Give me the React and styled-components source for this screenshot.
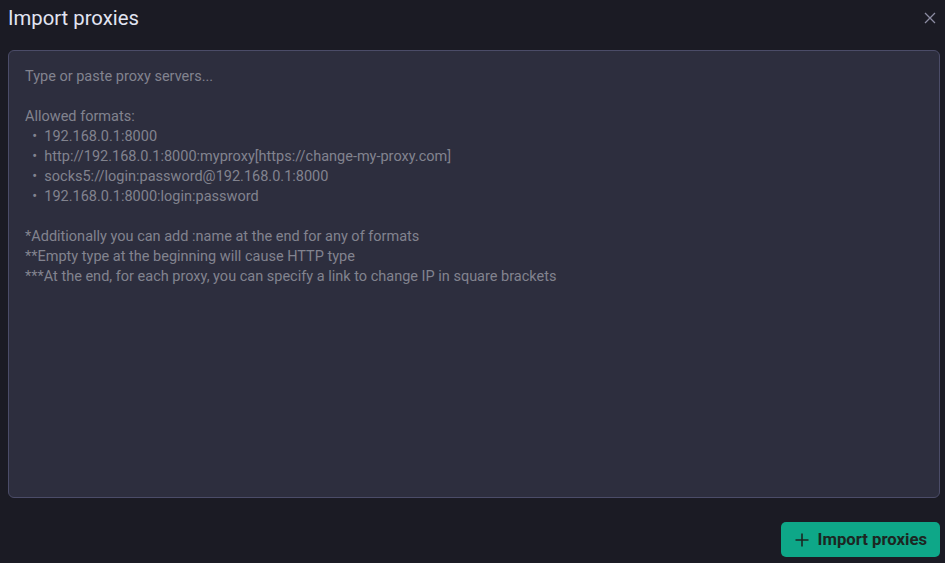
import React from "react";
import styled, { createGlobalStyle } from "styled-components";

const GlobalStyle = createGlobalStyle`
  html, body {
    margin: 0;
    padding: 0;
    background: #1b1b24;
  }
  * {
    box-sizing: border-box;
  }
`;

const Dialog = styled.div`
  width: 945px;
  height: 563px;
  display: flex;
  flex-direction: column;
  padding: 0 5px 6px 8px;
  background: #1b1b24;
  font-family: Roboto, "Liberation Sans", sans-serif;
`;

const Header = styled.div`
  display: flex;
  align-items: center;
  justify-content: space-between;
  height: 37px;
  padding-bottom: 2px;
`;

const Title = styled.h1`
  margin: 0;
  font-size: 20.3px;
  font-weight: 400;
  color: #e2e5f2;
`;

const CloseButton = styled.button`
  border: none;
  background: none;
  padding: 0;
  width: 16px;
  height: 16px;
  margin-right: 2px;
  display: flex;
  align-items: center;
  justify-content: center;
  cursor: pointer;
  color: #8c8ca2;
`;

const Body = styled.div`
  margin-top: 13px;
  height: 448px;
`;

const ProxyInput = styled.textarea`
  width: 100%;
  height: 100%;
  resize: none;
  background: #2d2e3e;
  border: 1px solid #4b4c68;
  border-radius: 6px;
  padding: 16px 16px;
  font-family: Roboto, "Liberation Sans", sans-serif;
  font-size: 14.5px;
  line-height: 20px;
  color: #d0d2de;
  outline: none;

  &::placeholder {
    color: #82838f;
  }
`;

const Footer = styled.div`
  margin-top: auto;
  display: flex;
  justify-content: flex-end;
`;

const PrimaryButton = styled.button`
  display: flex;
  align-items: center;
  gap: 9px;
  height: 35px;
  padding: 0 13px 0 14px;
  border: none;
  border-radius: 5px;
  background: #0ea788;
  color: #1c2622;
  font-family: Roboto, "Liberation Sans", sans-serif;
  font-size: 16.7px;
  font-weight: 700;
  cursor: pointer;
`;

const placeholder = [
  "Type or paste proxy servers...",
  "",
  "Allowed formats:",
  "  •  192.168.0.1:8000",
  "  •  http://192.168.0.1:8000:myproxy[https://change-my-proxy.com]",
  "  •  socks5://login:password@192.168.0.1:8000",
  "  •  192.168.0.1:8000:login:password",
  "",
  "*Additionally you can add :name at the end for any of formats",
  "**Empty type at the beginning will cause HTTP type",
  "***At the end, for each proxy, you can specify a link to change IP in square brackets",
].join("\n");

function App() {
  return (
    <>
      <GlobalStyle />
      <Dialog>
        <Header>
          <Title>Import proxies</Title>
          <CloseButton aria-label="Close">
            <svg width="12" height="12" viewBox="0 0 12 12">
              <path d="M1 1L11 11M11 1L1 11" stroke="currentColor" strokeWidth="1.3" />
            </svg>
          </CloseButton>
        </Header>
        <Body>
          <ProxyInput placeholder={placeholder} />
        </Body>
        <Footer>
          <PrimaryButton>
            <svg width="14" height="14" viewBox="0 0 14 14">
              <path d="M7 0.5V13.5M0.5 7H13.5" stroke="currentColor" strokeWidth="1.6" />
            </svg>
            Import proxies
          </PrimaryButton>
        </Footer>
      </Dialog>
    </>
  );
}

export default App;
